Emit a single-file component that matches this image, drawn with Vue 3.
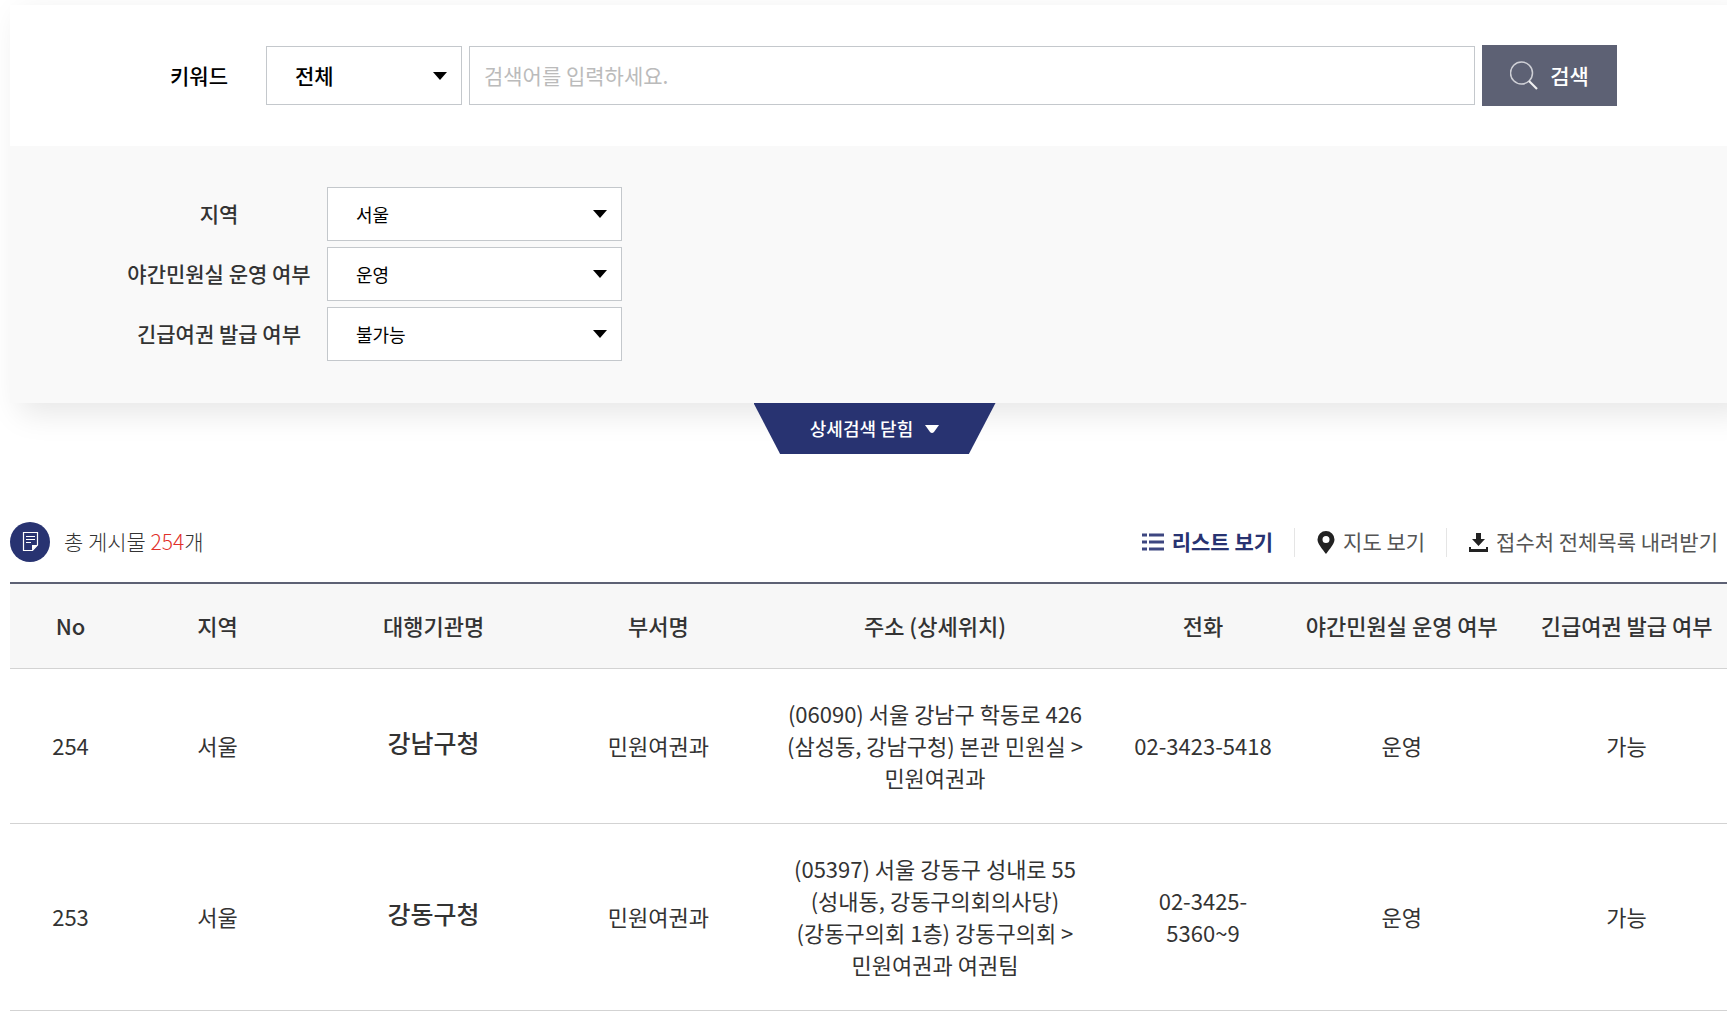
<script setup>
import { ref } from 'vue'

const searchType = ref('전체')
const keyword = ref('')
const detailOpen = ref(true)

const filters = ref([
  { id: 'region', label: '지역', value: '서울', options: ['전체', '서울', '부산', '대구', '인천'] },
  { id: 'night', label: '야간민원실 운영 여부', value: '운영', options: ['전체', '운영', '미운영'] },
  { id: 'urgent', label: '긴급여권 발급 여부', value: '불가능', options: ['전체', '가능', '불가능'] }
])

const columns = ['No', '지역', '대행기관명', '부서명', '주소 (상세위치)', '전화', '야간민원실 운영 여부', '긴급여권 발급 여부']

const rows = [
  {
    no: 254,
    region: '서울',
    name: '강남구청',
    dept: '민원여권과',
    address: '(06090) 서울 강남구 학동로 426 (삼성동, 강남구청) 본관 민원실 > 민원여권과',
    tel: '02-3423-5418',
    night: '운영',
    urgent: '가능'
  },
  {
    no: 253,
    region: '서울',
    name: '강동구청',
    dept: '민원여권과',
    address: '(05397) 서울 강동구 성내로 55 (성내동, 강동구의회의사당) (강동구의회 1층) 강동구의회 > 민원여권과 여권팀',
    tel: '02-3425-5360~9',
    night: '운영',
    urgent: '가능'
  }
]

const toggleDetail = () => {
  detailOpen.value = !detailOpen.value
}
</script>

<template>
  <div class="page">
    <main class="content">
      <form class="search" @submit.prevent>
        <div class="search-main">
          <label class="search-label" for="search-type">키워드</label>
          <select id="search-type" v-model="searchType" class="select select-type">
            <option>전체</option>
            <option>기관명</option>
            <option>주소</option>
          </select>
          <input v-model="keyword" class="keyword" type="text" placeholder="검색어를 입력하세요." aria-label="검색어" />
          <button class="search-button" type="submit">
            <svg width="28" height="29" viewBox="0 0 28 29" fill="none" aria-hidden="true">
              <circle cx="11.5" cy="12" r="11" stroke="#cfd0d6" stroke-width="1.5" />
              <path d="M19 20l8 8" stroke="#f0f0f2" stroke-width="2.2" />
            </svg>
            <span>검색</span>
          </button>
        </div>

        <div v-if="detailOpen" class="search-detail">
          <template v-for="f in filters" :key="f.id">
            <label class="filter-label" :for="f.id">{{ f.label }}</label>
            <select :id="f.id" v-model="f.value" class="select">
              <option v-for="o in f.options" :key="o">{{ o }}</option>
            </select>
          </template>
        </div>
      </form>

      <button class="detail-toggle" type="button" :aria-expanded="detailOpen" @click="toggleDetail">
        <span>상세검색 닫힘</span>
        <svg width="14" height="8" viewBox="0 0 14 8" fill="#fff" aria-hidden="true">
          <path d="M0 0h14L9 7Q7 9 5 7z" />
        </svg>
      </button>

      <div class="list-head">
        <p class="total">
          <svg width="40" height="40" viewBox="0 0 40 40" aria-hidden="true">
            <circle cx="20" cy="20" r="20" fill="#283371" />
            <path d="M13.5 10.5h14V23l-5 5.500h-9z" fill="none" stroke="#fff" stroke-width="1.2" />
            <path d="M16 14.500h9M16 17.500h9M16 20.500h5" stroke="#fff" stroke-width="1.1" />
            <path d="M22 28.500V23h5.500z" fill="#fff" />
          </svg>
          <span>총 게시물 <em>254</em>개</span>
        </p>
        <ul class="views">
          <li>
            <a class="active" href="#">
              <svg width="22" height="18" viewBox="0 0 22 18" stroke="#3d4680" stroke-width="3" aria-hidden="true">
                <path d="M0 2h5M7 2h15M0 9h5M7 9h15M0 16h5M7 16h15" />
              </svg>
              <span>리스트 보기</span>
            </a>
          </li>
          <li>
            <a href="#">
              <svg width="18" height="23" viewBox="0 0 18 23" fill="#222" aria-hidden="true">
                <path fill-rule="evenodd" d="M9 0a8.5 8.5 0 0 1 8.5 8.5C17.5 13 12.5 18 9 23 5.5 18 .5 13 .5 8.5A8.5 8.5 0 0 1 9 0zm0 5a3.5 3.5 0 1 0 0 7 3.5 3.5 0 0 0 0-7z" />
              </svg>
              <span>지도 보기</span>
            </a>
          </li>
          <li>
            <a href="#">
              <svg width="19" height="19" viewBox="0 0 19 19" fill="#222" aria-hidden="true">
                <path d="M7 0h5v6h4l-6.500 7L3 6h4z" />
                <path d="M0 14h2v2h15v-2h2v5H0z" />
              </svg>
              <span>접수처 전체목록 내려받기</span>
            </a>
          </li>
        </ul>
      </div>

      <table class="list">
        <colgroup>
          <col class="w7" />
          <col class="w10" />
          <col class="w15" />
          <col class="w11" />
          <col class="w21" />
          <col class="w10" />
          <col class="w13" />
          <col class="w13" />
        </colgroup>
        <thead>
          <tr>
            <th v-for="c in columns" :key="c" scope="col">{{ c }}</th>
          </tr>
        </thead>
        <tbody>
          <tr v-for="row in rows" :key="row.no">
            <td>{{ row.no }}</td>
            <td>{{ row.region }}</td>
            <td><a class="name" href="#">{{ row.name }}</a></td>
            <td>{{ row.dept }}</td>
            <td>{{ row.address }}</td>
            <td>{{ row.tel }}</td>
            <td>{{ row.night }}</td>
            <td>{{ row.urgent }}</td>
          </tr>
        </tbody>
      </table>
    </main>
  </div>
</template>

<style>
body {
  background: #fff;
}
</style>

<style scoped>
.page {
  overflow: hidden;
  padding: 5px 0 0 10px;
  font-family: "Noto Sans CJK KR", "Noto Sans", sans-serif;
  font-size: 21px;
  line-height: 32px;
  color: #333;
  word-break: keep-all;
}

.page * {
  box-sizing: border-box;
}

.content {
  margin-right: -12px;
}

select,
input,
button {
  margin: 0;
  font-family: inherit;
}

a {
  color: inherit;
  text-decoration: none;
}

/* the font sits low in its line box */
label,
button span,
.total span,
.views span {
  padding-bottom: 2px;
}

.search {
  background: #fff;
  box-shadow: 10px 10px 30px rgba(0, 0, 0, 0.1);
}

.search-main {
  display: flex;
  align-items: center;
  gap: 7px;
  padding: 40px 122px 40px 160px;
}

.search-label {
  margin-right: 31px;
  font-weight: 500;
  color: #000;
}

.select {
  appearance: none;
  height: 54px;
  padding: 0 28px;
  border: 1px solid #c4c8cc;
  border-radius: 0;
  background: #fff url("data:image/svg+xml,%3Csvg xmlns='http://www.w3.org/2000/svg' width='14' height='8'%3E%3Cpath d='M0 0h14L7 8z'/%3E%3C/svg%3E") no-repeat right 14px center;
  font-size: 18px;
  color: #000;
}

.select-type,
.keyword {
  height: 59px;
  padding-bottom: 2px;
  font-size: 21px;
}

.select-type {
  width: 196px;
  font-weight: 500;
}

.keyword {
  flex: 1;
  min-width: 0;
  padding-left: 14px;
  border: 1px solid #c4c8cc;
  color: #000;
}

.keyword::placeholder {
  color: #bbb;
}

.search-button {
  display: flex;
  align-items: center;
  justify-content: center;
  gap: 12px;
  width: 135px;
  height: 61px;
  border: 0;
  background: #5d6174;
  font-size: 21px;
  font-weight: 500;
  color: #fff;
  cursor: pointer;
}

.search-detail {
  display: grid;
  grid-template-columns: 184px 295px;
  gap: 6px 16px;
  align-items: center;
  padding: 41px 117px 42px;
  background: #f9f9f9;
}

.filter-label {
  font-weight: 500;
  text-align: center;
  white-space: nowrap;
}

.detail-toggle {
  display: flex;
  position: relative;
  align-items: center;
  justify-content: center;
  gap: 12px;
  width: 242px;
  height: 51px;
  margin: 0 auto;
  border: 0;
  background: #283371;
  clip-path: polygon(0 0, 100% 0, 89% 100%, 11% 100%);
  font-size: 18px;
  font-weight: 500;
  color: #fff;
  cursor: pointer;
}

.list-head {
  display: flex;
  align-items: center;
  justify-content: space-between;
  margin: 68px 0 20px;
}

.total {
  display: flex;
  align-items: center;
  gap: 14px;
  margin: 0;
  font-weight: 300;
}

.total em {
  font-style: normal;
  color: #e1302a;
}

.views {
  display: flex;
  margin: 0;
  padding: 0;
  list-style: none;
}

.views li + li {
  border-left: 1px solid #e5e5e5;
}

.views a {
  display: flex;
  align-items: center;
  gap: 8px;
  height: 29px;
  padding: 0 21px 0 22px;
  color: #555;
}

.views .active {
  font-weight: 700;
  color: #283371;
}

.list {
  width: 100%;
  border-top: 2px solid #5d6174;
  border-collapse: separate;
  border-spacing: 0;
  table-layout: fixed;
  font-size: 22px;
  text-align: center;
}

.list th {
  padding: 25px 10px 27px;
  border-bottom: 1px solid #d3d3d3;
  background: #f7f7f7;
  font-weight: 500;
}

.list td {
  padding: 28px 10px 30px;
  border-bottom: 1px solid #d3d3d3;
}

.name {
  display: inline-block;
  padding-bottom: 6px;
  font-size: 25px;
  font-weight: 500;
}

.w7 {
  width: 7%;
}

.w10 {
  width: 10%;
}

.w11 {
  width: 11%;
}

.w13 {
  width: 13%;
}

.w15 {
  width: 15%;
}

.w21 {
  width: 21%;
}
</style>
